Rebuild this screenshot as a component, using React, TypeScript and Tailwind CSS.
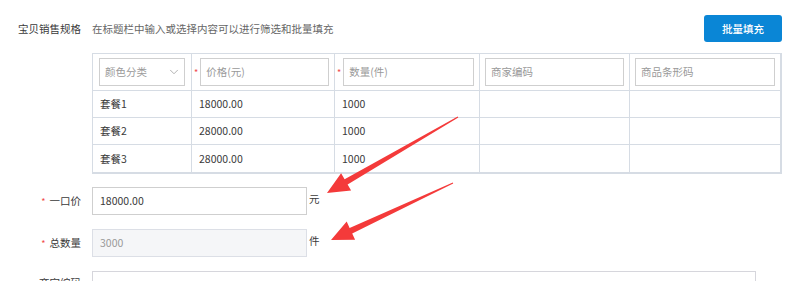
import React from 'react';
import { ChevronDown } from 'lucide-react';

const rows = [
  { name: '套餐1', price: '18000.00', qty: '1000' },
  { name: '套餐2', price: '28000.00', qty: '1000' },
  { name: '套餐3', price: '28000.00', qty: '1000' },
];

const Star = () => <span className="text-[#f04a4a] text-[9px] leading-none">*</span>;

const App: React.FC = () => {
  return (
    <div className="relative w-[800px] h-[281px] overflow-hidden bg-white text-[10.5px] text-[#3a3a3a] font-['Noto_Sans_CJK_SC','Noto_Sans',sans-serif]">
      <div className="pt-[15px] pr-[18px]">
        {/* Title row */}
        <div className="flex items-center h-[27px]">
          <div className="w-[92px] pr-[11px] text-right shrink-0">宝贝销售规格</div>
          <div className="flex-1 text-[#666]">在标题栏中输入或选择内容可以进行筛选和批量填充</div>
          <button className="h-[27px] w-[78px] rounded-[3px] bg-[#0a86d6] text-white font-medium">
            批量填充
          </button>
        </div>

        {/* Spec table */}
        <div className="ml-[92px] mt-[11px] border border-[#d6dce4] border-r-2 border-b-2">
          <div className="flex h-[37px] border-b border-[#d6dce4]">
            <div className="w-[99px] px-[6px] flex items-center border-r border-[#d6dce4]">
              <div className="flex-1 h-[28px] border border-[#cfcfcf] flex items-center justify-between pl-[5px] pr-[3px] text-[#999]">
                <span>颜色分类</span>
                <ChevronDown size={14} strokeWidth={1.3} className="text-[#999]" />
              </div>
            </div>
            <div className="w-[143px] pl-[2px] pr-[5px] flex items-center gap-[2px] border-r border-[#d6dce4]">
              <Star />
              <div className="flex-1 h-[28px] border border-[#cfcfcf] flex items-center pl-[5px] text-[#999]">价格(元)</div>
            </div>
            <div className="w-[145px] pl-[2px] pr-[5px] flex items-center gap-[2px] border-r border-[#d6dce4]">
              <Star />
              <div className="flex-1 h-[28px] border border-[#cfcfcf] flex items-center pl-[5px] text-[#999]">数量(件)</div>
            </div>
            <div className="w-[150px] px-[5px] flex items-center border-r border-[#d6dce4]">
              <div className="flex-1 h-[28px] border border-[#cfcfcf] flex items-center pl-[5px] text-[#999]">商家编码</div>
            </div>
            <div className="flex-1 px-[5px] flex items-center">
              <div className="flex-1 h-[28px] border border-[#cfcfcf] flex items-center pl-[5px] text-[#999]">商品条形码</div>
            </div>
          </div>
          {rows.map((r, i) => (
            <div key={r.name} className={`flex h-[27px] ${i < rows.length - 1 ? 'border-b border-[#d6dce4]' : ''}`}>
              <div className="w-[99px] pl-[7px] flex items-center border-r border-[#d6dce4]">{r.name}</div>
              <div className="w-[143px] pl-[7px] flex items-center border-r border-[#d6dce4]">{r.price}</div>
              <div className="w-[145px] pl-[7px] flex items-center border-r border-[#d6dce4]">{r.qty}</div>
              <div className="w-[150px] border-r border-[#d6dce4]" />
              <div className="flex-1" />
            </div>
          ))}
        </div>

        {/* Form rows */}
        <div className="mt-[13px] flex flex-col gap-[14px]">
          <div className="flex items-center h-[28px]">
            <div className="w-[92px] pr-[11px] text-right shrink-0 flex items-center justify-end gap-[4px]">
              <Star />
              <span>一口价</span>
            </div>
            <div className="w-[215px] h-[28px] border border-[#cfcfcf] flex items-center pl-[7px]">18000.00</div>
            <span className="ml-[2px] -mt-[4px]">元</span>
          </div>
          <div className="flex items-center h-[28px]">
            <div className="w-[92px] pr-[11px] text-right shrink-0 flex items-center justify-end gap-[4px]">
              <Star />
              <span>总数量</span>
            </div>
            <div className="w-[215px] h-[28px] border border-[#dcdfe6] bg-[#f5f6f8] flex items-center pl-[7px] text-[#999]">3000</div>
            <span className="ml-[2px] -mt-[4px]">件</span>
          </div>
          <div className="flex items-start h-[28px]">
            <div className="w-[92px] pr-[11px] text-right shrink-0 pt-[4px]">商家编码</div>
            <div className="w-[664px] h-[28px] border border-[#d6d6dc]" />
          </div>
        </div>
      </div>

      {/* Annotation arrows */}
      <svg className="absolute inset-0 pointer-events-none" width="800" height="281" viewBox="0 0 800 281">
        <polygon
          fill="#f43a3a"
          points="458.3,117.4 347.6,184.5 351.1,190.6 327,193 341.1,173.2 344.6,179.3 457.7,116.6"
        />
        <polygon
          fill="#f43a3a"
          points="453.2,183.5 352.2,233.4 355.1,239.8 331,240 346.7,221.6 349.6,228 452.8,182.5"
        />
      </svg>
    </div>
  );
};

export default App;
